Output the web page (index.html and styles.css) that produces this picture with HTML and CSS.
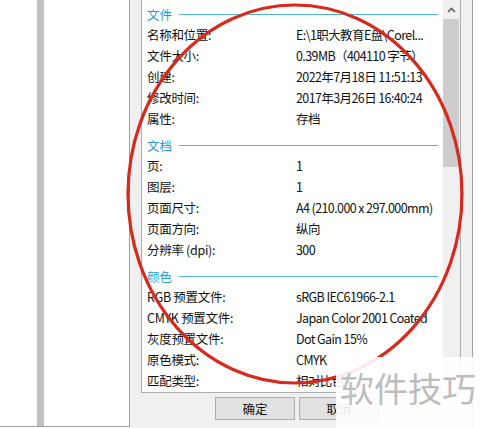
FILE: index.html
```html
<!DOCTYPE html>
<html lang="zh">
<head>
<meta charset="utf-8">
<link rel="stylesheet" href="styles.css">
</head>
<body>
<div class="screen">
  <div class="leftwin"><div class="bar"></div></div>
  <div class="dialog">
    <div class="panel">
      <div class="content">
        <div class="group first">
          <div class="ghead"><span>文件</span><i class="rule"></i></div>
          <div class="row"><span class="k">名称和位置:</span><span class="v">E:\1职大教育E盘\Corel...</span></div>
          <div class="row"><span class="k">文件大小:</span><span class="v">0.39MB（404110 字节）</span></div>
          <div class="row"><span class="k">创建:</span><span class="v">2022年7月18日 11:51:13</span></div>
          <div class="row"><span class="k">修改时间:</span><span class="v">2017年3月26日 16:40:24</span></div>
          <div class="row"><span class="k">属性:</span><span class="v">存档</span></div>
        </div>
        <div class="group">
          <div class="ghead"><span>文档</span><i class="rule"></i></div>
          <div class="row"><span class="k">页:</span><span class="v">1</span></div>
          <div class="row"><span class="k">图层:</span><span class="v">1</span></div>
          <div class="row"><span class="k">页面尺寸:</span><span class="v">A4 (210.000 x 297.000mm)</span></div>
          <div class="row"><span class="k">页面方向:</span><span class="v">纵向</span></div>
          <div class="row"><span class="k">分辨率 (dpi):</span><span class="v">300</span></div>
        </div>
        <div class="group">
          <div class="ghead"><span>颜色</span><i class="rule"></i></div>
          <div class="row"><span class="k">RGB 预置文件:</span><span class="v">sRGB IEC61966-2.1</span></div>
          <div class="row"><span class="k">CMYK 预置文件:</span><span class="v">Japan Color 2001 Coated</span></div>
          <div class="row"><span class="k">灰度预置文件:</span><span class="v">Dot Gain 15%</span></div>
          <div class="row"><span class="k">原色模式:</span><span class="v">CMYK</span></div>
          <div class="row"><span class="k">匹配类型:</span><span class="v">相对比色</span></div>
        </div>
      </div>
      <div class="scrollbar">
        <div class="arrow"><svg width="9" height="6" viewBox="0 0 9 6"><path d="M1 5 L4.5 1.5 L8 5" fill="none" stroke="#606060" stroke-width="1.6"/></svg></div>
        <div class="thumb"></div>
      </div>
    </div>
    <div class="buttons">
      <button class="btn">确定</button>
      <button class="btn">取消</button>
    </div>
  </div>
  <div class="rightedge"></div>
  <svg class="mark" width="480" height="428" viewBox="0 0 480 428"><ellipse cx="295" cy="194" rx="167" ry="189" fill="none" stroke="#d62a1e" stroke-width="3.2"/></svg>
  <div class="watermark">软件技巧</div>
</div>
</body>
</html>
```

FILE: styles.css
```css
html, body {
  margin: 0;
  padding: 0;
  background: #ffffff;
}
.screen {
  position: relative;
  width: 480px;
  height: 428px;
  overflow: hidden;
  display: flex;
  font-family: "Noto Sans CJK SC", "Noto Sans", sans-serif;
  font-size: 12.5px;
  color: #111;
}
.leftwin {
  width: 129px;
  height: 426px;
  background: #fff;
  border-right: 1px solid #a0a0a0;
  border-bottom: 1px solid #a0a0a0;
  flex: none;
}
.bar {
  margin-left: 37px;
  width: 7px;
  height: 100%;
  background: #c0c0c0;
}
.dialog {
  width: 342px;
  height: 428px;
  flex: none;
  background: #f0f0f0;
  border-right: 1px solid #a0a0a0;
}
.panel {
  margin: -1px 0 0 11px;
  width: 318px;
  display: flex;
  background: #fff;
  border: 1px solid #adadad;
}
.content {
  width: 291px;
  padding: 4px 5px 1px 5px;
}
.group + .group {
  margin-top: 6px;
}
.ghead {
  height: 20px;
  display: flex;
  align-items: center;
  gap: 7px;
  color: #2a9ad6;
}
.rule {
  flex: 1;
  height: 1px;
  background: #4fb6d4;
}
.row {
  height: 21px;
  display: flex;
  align-items: center;
  white-space: nowrap;
}
.k {
  width: 149px;
  flex: none;
  letter-spacing: -0.3px;
}
.v {
  flex: 1;
  letter-spacing: -0.6px;
}
.scrollbar {
  width: 17px;
  background: #f0f0f0;
  display: flex;
  flex-direction: column;
}
.arrow {
  height: 19px;
  display: flex;
  align-items: center;
  justify-content: center;
}
.thumb {
  height: 148px;
  margin: 0 1px 0 0;
  background: #cdcdcd;
}
.buttons {
  display: flex;
  gap: 4px;
  margin: 4px 0 0 85px;
}
.btn {
  width: 80px;
  height: 23px;
  padding: 0;
  background: #e1e1e1;
  border: 1px solid #adadad;
  font-family: inherit;
  font-size: 12.5px;
  color: #111;
}
.rightedge {
  flex: 1;
  background: #fff;
}
.mark {
  position: absolute;
  left: 0;
  top: 0;
  pointer-events: none;
}
.watermark {
  position: absolute;
  left: 336px;
  top: 357px;
  width: 140px;
  height: 71px;
  padding: 11px 0 0 4px;
  box-sizing: border-box;
  background: rgba(255, 255, 255, 0.9);
  font-size: 34px;
  line-height: 40px;
  color: #bdbdbd;
  white-space: nowrap;
}
```
